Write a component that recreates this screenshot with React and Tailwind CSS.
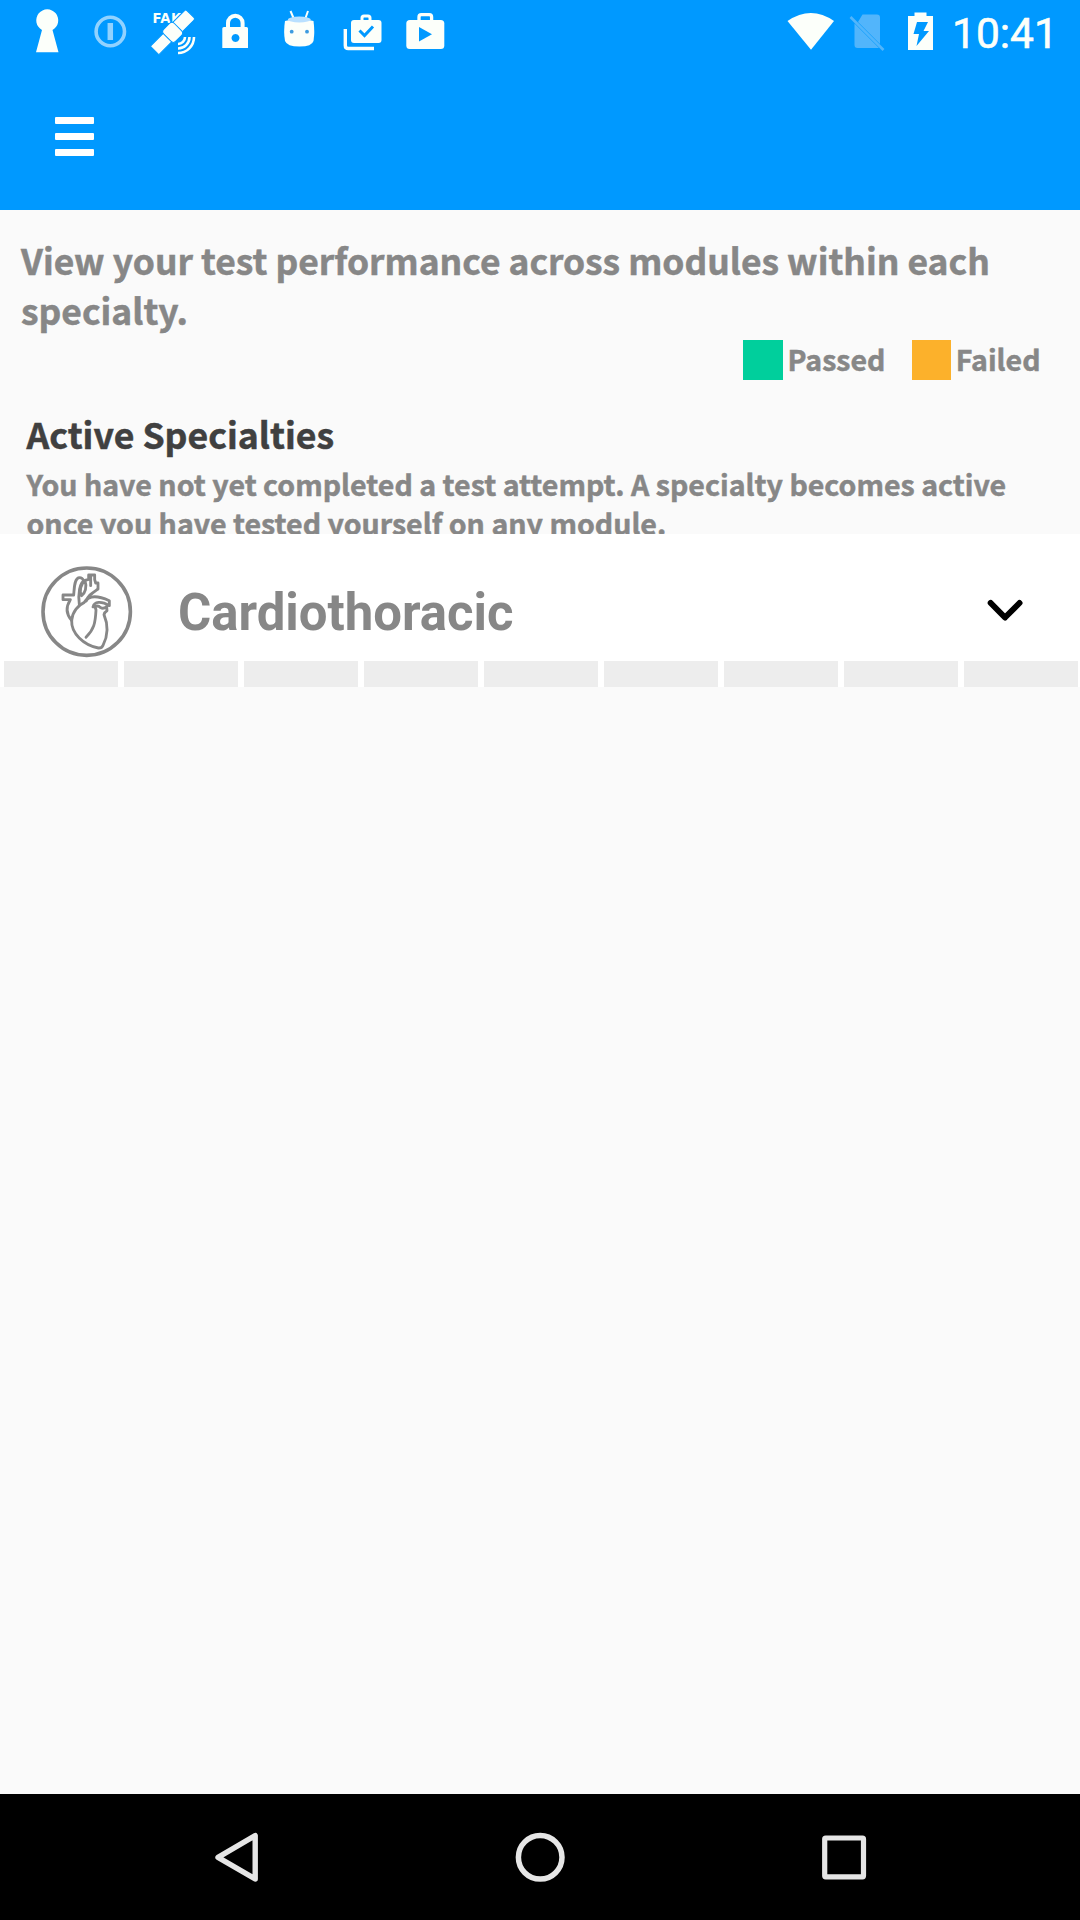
const SANS = "font-['Noto_Sans_CJK_SC',sans-serif] font-bold [-webkit-text-stroke:0.5px_currentColor]";

// Every icon is drawn on the screen's own coordinate grid: box = [x, y, width, height].
function Icon({ box, className = "", children }) {
  return (
    <svg
      viewBox={box.join(" ")}
      width={box[2]}
      height={box[3]}
      className={`block shrink-0 ${className}`}
      fill="none"
    >
      {children}
    </svg>
  );
}

function StatusBar() {
  return (
    <div className="flex h-[63px] items-start justify-between pl-[30px] pr-[26px] text-[#fcfffa]">
      <div className="flex">
        <Icon box={[30, 0, 60, 63]}>
          <path d="M42 30a11 11 0 1 1 10.500 0L58.500 52.300H36z" fill="currentColor" />
        </Icon>
        <Icon box={[90, 0, 55, 63]}>
          <g stroke="#99d6ff" opacity=".95">
            <circle cx="110.300" cy="31.500" r="14.200" strokeWidth="3.600" />
            <path d="M110.300 23v17" strokeWidth="5.500" />
          </g>
        </Icon>
        <Icon box={[145, 0, 70, 63]}>
          <text x="152.500" y="23" fontFamily="DejaVu Sans" fontWeight="700" fontSize="13.200" textLength="38" fill="currentColor">FAKE</text>
          <g transform="rotate(-45 173 32)" fill="currentColor" stroke="#0099ff" strokeWidth="1">
            <rect x="147" y="26" width="19" height="12" />
            <rect x="178" y="25" width="20" height="13.500" rx="2" />
            <rect x="165" y="23.500" width="15" height="17" rx="3.500" />
          </g>
          <path d="M178 44a7 7 0 0 0 7-7M178 48.500a11.500 11.500 0 0 0 11.500-11.500M178 53a16 16 0 0 0 16-16" stroke="currentColor" strokeWidth="2.600" />
        </Icon>
        <Icon box={[215, 0, 60, 63]}>
          <path d="M228 28v-5a7.300 7.300 0 0 1 14.600 0v5" stroke="currentColor" strokeWidth="4" />
          <path fillRule="evenodd" d="M224 27h22.500q1.500 0 1.500 1.500V48h-25.700V28.500q0-1.500 1.700-1.500zM235.500 34a4 4 0 1 0 .01 0z" fill="currentColor" />
        </Icon>
        <Icon box={[275, 0, 60, 63]}>
          <path d="M290.500 11l3 7M308 11l-2.500 7" stroke="currentColor" strokeWidth="2" />
          <path d="M285 21q14-4 28.500 0 1.500 11 0 20-1.500 5.500-14 5.500t-14.500-5.500q-1.700-9 0-20z" fill="currentColor" />
          <ellipse cx="299.300" cy="19.500" rx="11.500" ry="3" fill="#b9e0ff" />
          <g fill="#3c9be0"><circle cx="291.700" cy="31.700" r="1.900" /><circle cx="307" cy="31.700" r="1.900" /></g>
        </Icon>
        <Icon box={[335, 0, 60, 63]}>
          <path d="M345.300 29v16.500q0 3 3 3H374" stroke="currentColor" strokeWidth="3.400" />
          <path d="M362 21v-3q0-2 2-2h4q2 0 2 2v3" stroke="currentColor" strokeWidth="3" />
          <rect x="351" y="20" width="30.500" height="23" rx="3" fill="currentColor" />
          <path d="M359.500 30.500l5 5 8.500-9" stroke="#0099ff" strokeWidth="3" />
        </Icon>
        <Icon box={[395, 0, 60, 63]}>
          <path d="M419 21v-4q0-2.300 2.300-2.300h8q2.300 0 2.300 2.300v4" stroke="currentColor" strokeWidth="3.300" />
          <rect x="406.300" y="20" width="38" height="29" rx="3.500" fill="currentColor" />
          <path d="M419 27v14.500l13-7.300z" fill="#0099ff" />
        </Icon>
      </div>
      <div className="flex">
        <Icon box={[780, 0, 65, 63]}>
          <path d="M787.500 21q23.500-16 46.500 0L811 49.800z" fill="currentColor" />
        </Icon>
        <Icon box={[845, 0, 55, 63]}>
          <path d="M862.500 14.500H877q3 0 3 3V44l-22-22zM854.500 23.500L879 48H857.500q-3 0-3-3z" fill="#52b5fb" />
          <path d="M850.500 17l33 33" stroke="#52b5fb" strokeWidth="2.600" />
        </Icon>
        <Icon box={[900, 0, 52, 63]}>
          <path d="M914.500 12.500h12V16h6.500v34h-25V16h6.500z" fill="currentColor" />
          <path d="M917 22h11l-4.500 9h5.500l-12.500 15 2.500-12h-5.500z" fill="#0099ff" />
        </Icon>
        <span className="h-[63px] w-[102px] whitespace-nowrap font-[Roboto,sans-serif] text-[42.500px] leading-[67px] [-webkit-text-stroke:0.6px_currentColor]">10:41</span>
      </div>
    </div>
  );
}

function Legend({ swatch, label, className }) {
  return (
    <div className={`flex items-center ${className}`}>
      <span className={`size-10 ${swatch}`} />
      <span className={`${SANS} -mt-[3px] ml-[5px] text-[28.500px] leading-10`}>{label}</span>
    </div>
  );
}

function HeartIcon() {
  return (
    <Icon box={[40, 565, 94, 94]}>
      <circle cx="86.700" cy="611.700" r="43.700" stroke="#878787" strokeWidth="3.600" />
      <g
        transform="translate(55 565) scale(.33333)"
        stroke="#878787"
        strokeWidth="8.500"
        strokeLinejoin="round"
        strokeLinecap="round"
      >
        <path d="M55 90H24v14h22M56 90C58 72 57 38 74 38q8 0 12 9M46 104C32 126 34 148 50 166" />
        <path d="M73 119C69 90 73 50 90 46L101 43V30h18v14l3 10h7v18C112 84 98 92 94 108M107 34v28M90 47C97 66 90 85 80 92 71 78 78 56 90 47" />
        <path d="M50 166C52 140 70 120 88 112 102 88 132 93 163 107v15C138 107 118 110 114 126" />
        <path d="M50 166C48 205 86 240 130 249q10 1 14-8C160 210 160 180 147 149q2-8 9-12l-1-12q-10 8-18 3-8-8-17-3l3 10c-2 40-6 58-30 82" />
      </g>
    </Icon>
  );
}

export default function App() {
  return (
    <div className="flex h-[1920px] w-[1080px] flex-col overflow-hidden bg-[#fafafa] text-[#878787]">
      <header className="h-[210px] shrink-0 bg-[#0099ff]">
        <StatusBar />
        <button className="ml-[54.5px] mt-[54px] flex flex-col gap-[9px]" aria-label="Menu">
          <span className="h-[7px] w-[39px] rounded-[1px] bg-white" />
          <span className="h-[7px] w-[39px] rounded-[1px] bg-white" />
          <span className="h-[7px] w-[39px] rounded-[1px] bg-white" />
        </button>
      </header>

      <section className="h-[324px] shrink-0 overflow-hidden">
        <p className={`${SANS} ml-[21px] mt-[25px] whitespace-nowrap text-[35.420px] leading-[49.500px]`}>
          View your test performance across modules within each
          <br />
          specialty.
        </p>
        <div className="mt-[6px] flex justify-end pr-[39.5px]">
          <Legend swatch="bg-[#00cf9c]" label="Passed" className="w-[169px]" />
          <Legend swatch="bg-[#fcb12b]" label="Failed" className="w-[129px]" />
        </div>
        <h2 className={`${SANS} ml-[26.5px] mt-[29px] text-[35.600px] leading-[49px] text-[#404040]`}>
          Active Specialties
        </h2>
        <p className={`${SANS} ml-[26.5px] mt-[7px] whitespace-nowrap text-[28.550px] leading-[38.500px]`}>
          You have not yet completed a test attempt. A specialty becomes active
          <br />
          once you have tested yourself on any module.
        </p>
      </section>

      <section className="flex h-[153px] shrink-0 flex-col bg-white">
        <div className="flex h-[127px] items-start pl-10 pt-[31px]">
          <HeartIcon />
          <span className="ml-[44px] mt-[18px] flex-1 font-[Roboto,sans-serif] text-[50.9px] font-bold leading-[60px]">
            Cardiothoracic
          </span>
          <Icon box={[980, 565, 100, 94]}>
            <path d="M990.700 603l14.300 14.500 14.500-14.500" stroke="#000" strokeWidth="6" strokeLinecap="round" strokeLinejoin="round" />
          </Icon>
        </div>
        <div className="grid h-[26px] grid-cols-9 gap-[6px] pl-1 pr-[2px]">
          {Array.from({ length: 9 }, (_, i) => (
            <span key={i} className="bg-[#ededed]" />
          ))}
        </div>
      </section>

      <nav className="mt-auto flex h-[126px] shrink-0 items-center justify-center gap-[244px] bg-black">
        <Icon box={[206, 1827, 60, 60]}>
          <path d="M255.200 1835.500v43.500L218 1857.300z" stroke="#e6e6e6" strokeWidth="5.400" strokeLinejoin="round" />
        </Icon>
        <Icon box={[510, 1827, 60, 60]}>
          <circle cx="540.200" cy="1857.300" r="21.800" stroke="#e6e6e6" strokeWidth="5.500" />
        </Icon>
        <Icon box={[814, 1827, 60, 60]}>
          <rect x="824.700" y="1838" width="38.800" height="38.800" rx="1" stroke="#e6e6e6" strokeWidth="5.200" />
        </Icon>
      </nav>
    </div>
  );
}
